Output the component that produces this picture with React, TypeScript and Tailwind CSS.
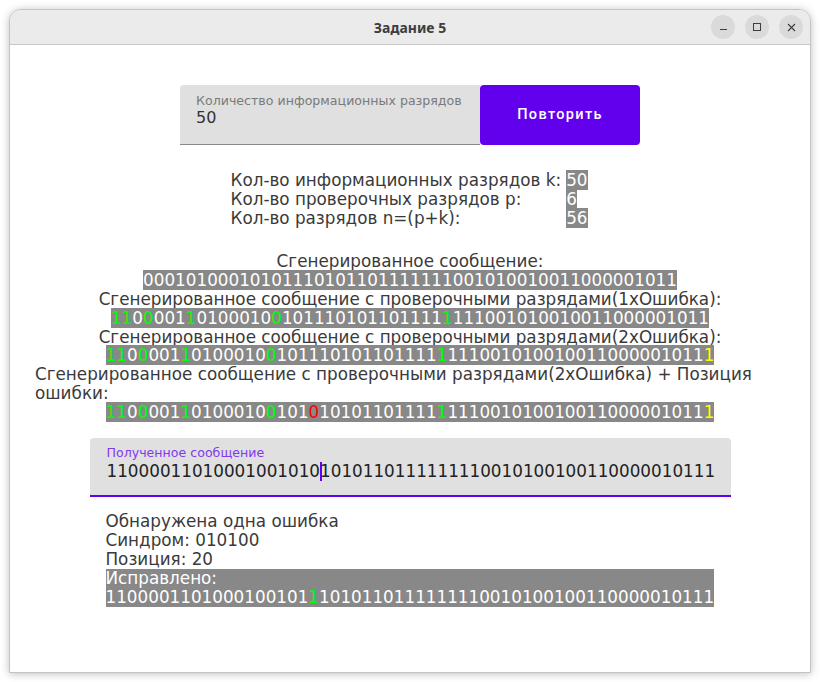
import React from "react";

type Seg = [string, ("g" | "r" | "y")?];

const tone = {
  g: "text-[#00ff00]",
  r: "text-[#ff0000]",
  y: "text-[#ffff00]",
};

const oneErr: Seg[] = [
  ["11", "g"],
  ["0"],
  ["0", "g"],
  ["001"],
  ["1", "g"],
  ["0100010"],
  ["0", "g"],
  ["101110101101111"],
  ["1", "g"],
  ["111001010010011000001011"],
];

const twoErr: Seg[] = [...oneErr, ["1", "y"]];

const withPos: Seg[] = [
  ["11", "g"],
  ["0"],
  ["0", "g"],
  ["001"],
  ["1", "g"],
  ["0100010"],
  ["0", "g"],
  ["101"],
  ["0", "r"],
  ["10101101111"],
  ["1", "g"],
  ["111001010010011000001011"],
  ["1", "y"],
];

const Bits = ({ segs }: { segs: Seg[] }) => (
  <div className="text-center">
    <span className="bg-[#888888] text-white">
      {segs.map(([t, c], i) => (
        <span key={i} className={c ? tone[c] : undefined}>
          {t}
        </span>
      ))}
    </span>
  </div>
);

const WinButton = ({ children }: { children: React.ReactNode }) => (
  <div className="w-[24px] h-[24px] rounded-full bg-[#dadada] flex items-center justify-center">
    {children}
  </div>
);

const App = () => {
  return (
    <div className="w-[820px] h-[682px] bg-white p-[9px] font-['DejaVu_Sans',sans-serif]">
      <div className="w-[802px] h-[664px] flex flex-col rounded-t-[12px] border border-[#c4c4c4] shadow-[0_1px_8px_rgba(0,0,0,0.25)] overflow-hidden bg-white">
        {/* title bar */}
        <div className="relative h-[35px] shrink-0 bg-[#ebebeb] border-b border-[#c9c9c9] flex items-center justify-center">
          <span className="font-['Noto_Sans',sans-serif] font-bold text-[14px] text-[#3d3d3d]">
            Задание 5
          </span>
          <div className="absolute right-[7px] top-[5px] flex gap-[10px]">
            <WinButton>
              <div className="w-[7px] h-[1px] bg-[#3d3d3d] mt-[5px]" />
            </WinButton>
            <WinButton>
              <div className="w-[8px] h-[8px] border border-[#3d3d3d]" />
            </WinButton>
            <WinButton>
              <svg width="9" height="9" viewBox="0 0 9 9">
                <path d="M1 1L8 8M8 1L1 8" stroke="#3d3d3d" strokeWidth="1.1" />
              </svg>
            </WinButton>
          </div>
        </div>

        {/* content */}
        <div className="flex-1 flex flex-col items-center pt-[40px] text-[16.8px] leading-[18.8px] text-[#3a3a3a]">
          <div className="flex">
            <div className="w-[300px] h-[60px] bg-[#e0e0e0] rounded-tl-[4px] border-b border-[#8a8a8a] pl-[16px] pt-[8px]">
              <div className="text-[12.6px] leading-[16px] text-[#7a7a7a]">
                Количество информационных разрядов
              </div>
              <div className="text-[16px] leading-[18px] text-[#333]">50</div>
            </div>
            <button className="w-[160px] h-[60px] bg-[#6200ee] rounded-[4px] text-white font-['Roboto',sans-serif] font-medium text-[14.5px] tracking-[1.35px]">
              Повторить
            </button>
          </div>

          <div className="mt-[26px] grid grid-cols-[auto_auto] gap-x-[5px] -translate-x-[1px]">
            <span>Кол-во информационных разрядов k:</span>
            <span>
              <span className="bg-[#888888] text-white">50</span>
            </span>
            <span>Кол-во проверочных разрядов p:</span>
            <span>
              <span className="bg-[#888888] text-white">6</span>
            </span>
            <span>Кол-во разрядов n=(p+k):</span>
            <span>
              <span className="bg-[#888888] text-white">56</span>
            </span>
          </div>

          <div className="mt-[25px] w-full flex flex-col">
            <div className="text-center">Сгенерированное сообщение:</div>
            <Bits segs={[["00010100010101110101101111111001010010011000001011"]]} />
            <div className="text-center">
              Сгенерированное сообщение с проверочными разрядами(1xОшибка):
            </div>
            <Bits segs={oneErr} />
            <div className="text-center">
              Сгенерированное сообщение с проверочными разрядами(2xОшибка):
            </div>
            <Bits segs={twoErr} />
            <div className="w-[750px] self-center text-left">
              Сгенерированное сообщение с проверочными разрядами(2xОшибка) + Позиция ошибки:
            </div>
            <Bits segs={withPos} />
          </div>

          <div className="mt-[16px] w-[641px] h-[59px] bg-[#e0e0e0] rounded-t-[4px] border-b-2 border-[#6200ee] pl-[17px] pt-[7px]">
            <div className="text-[12.6px] leading-[16px] text-[#8438f0]">Полученное сообщение</div>
            <div className="leading-[20px] text-[#222]">
              11000011010001001010
              <span className="inline-block w-[1.5px] h-[19px] bg-[#6200ee] align-middle -mr-[1.5px]" />
              1010110111111110010100100110000010111
            </div>
          </div>

          <div className="mt-[15px] w-[641px] pl-[16px] leading-[19px]">
            <div>Обнаружена одна ошибка</div>
            <div>Синдром: 010100</div>
            <div>Позиция: 20</div>
            <div className="inline-block bg-[#888888] text-white">
              <div>Исправлено:</div>
              <div>
                1100001101000100101
                <span className="text-[#00ff00]">1</span>
                1010110111111110010100100110000010111
              </div>
            </div>
          </div>
        </div>
      </div>
    </div>
  );
};

export default App;
